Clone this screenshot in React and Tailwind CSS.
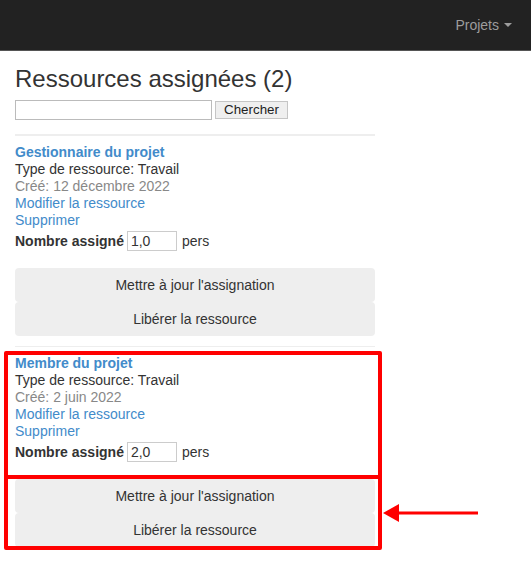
import { useState } from "react";

// Assigned resources for a project
const resources = [
  { title: "Gestionnaire du projet", type: "Travail", created: "12 décembre 2022", count: "1,0" },
  { title: "Membre du projet", type: "Travail", created: "2 juin 2022", count: "2,0" },
];

function ResourceItem({ res }) {
  const [count, setCount] = useState(res.count);

  return (
    <div>
      <div className="pt-[8px] text-[14px] leading-[17px]">
        <a href="#" className="block font-bold text-[#428bca]">
          {res.title}
        </a>
        <div className="text-[#333]">Type de ressource: {res.type}</div>
        <div className="text-[#888]">Créé: {res.created}</div>
        <a href="#" className="block text-[#428bca]">
          Modifier la ressource
        </a>
        <a href="#" className="block text-[#428bca]">
          Supprimer
        </a>
        <div className="flex h-[24px] items-center text-[#333]">
          <span className="font-bold">Nombre assigné</span>
          <input
            value={count}
            onChange={(e) => setCount(e.target.value)}
            className="ml-[3px] h-[20px] w-[50px] border border-[#ccc] px-[3px] text-[14px] text-[#333] outline-none"
          />
          <span className="ml-[5px]">pers</span>
        </div>
      </div>

      <div className="mt-[15px] flex flex-col">
        <button className="h-[34px] rounded-[4px] bg-[#eee] text-[14px] text-[#333]">
          Mettre à jour l'assignation
        </button>
        <button className="h-[34px] rounded-[4px] bg-[#eee] text-[14px] text-[#333]">
          Libérer la ressource
        </button>
      </div>
    </div>
  );
}

export default function App() {
  const [search, setSearch] = useState("");

  return (
    <div className="min-h-screen bg-white font-['Liberation_Sans',Arial,sans-serif]">
      {/* Navbar */}
      <div className="flex h-[51px] items-center justify-end border-b border-[#555] bg-[#222] pr-[19px]">
        <a href="#" className="flex items-center text-[14px] text-[#9d9d9d]">
          Projets
          <span className="ml-[5px] h-0 w-0 border-x-[4px] border-t-[4px] border-x-transparent border-t-[#9d9d9d]" />
        </a>
      </div>

      <div className="w-[375px] pl-[15px]">
        <h1 className="mt-[15px] text-[24px] leading-[26px] text-[#333]">
          Ressources assignées (2)
        </h1>

        {/* Search */}
        <div className="mt-[8px] flex items-center">
          <input
            value={search}
            onChange={(e) => setSearch(e.target.value)}
            className="h-[20px] w-[197px] border border-[#bbb] px-[2px] text-[13px] outline-none"
          />
          <button className="ml-[3px] h-[18px] w-[73px] border border-[#c5c5c5] bg-[#efefef] text-[13.33px] leading-[16px] text-[#222]">
            Chercher
          </button>
        </div>

        <div className="mt-[14px] h-[2px] bg-[#eee]" />
        <ResourceItem res={resources[0]} />

        <div className="mt-[10px] h-[1px] bg-[#eee]" />

        {/* Highlighted second resource */}
        <div className="relative">
          <ResourceItem res={resources[1]} />

          <div className="absolute left-[-11px] top-[4px] h-[128px] w-[378px] rounded-[2px] border-[4px] border-[#f00]" />
          <div className="absolute left-[-11px] top-[128px] h-[75px] w-[378px] rounded-[2px] border-[4px] border-[#f00]" />
          <svg
            className="absolute left-[368px] top-[156px]"
            width="96"
            height="20"
            viewBox="0 0 96 20"
          >
            <line x1="14" y1="10" x2="95" y2="10" stroke="#f00" strokeWidth="3" />
            <polygon points="0,10 16,1 16,19" fill="#f00" />
          </svg>
        </div>
      </div>
    </div>
  );
}
